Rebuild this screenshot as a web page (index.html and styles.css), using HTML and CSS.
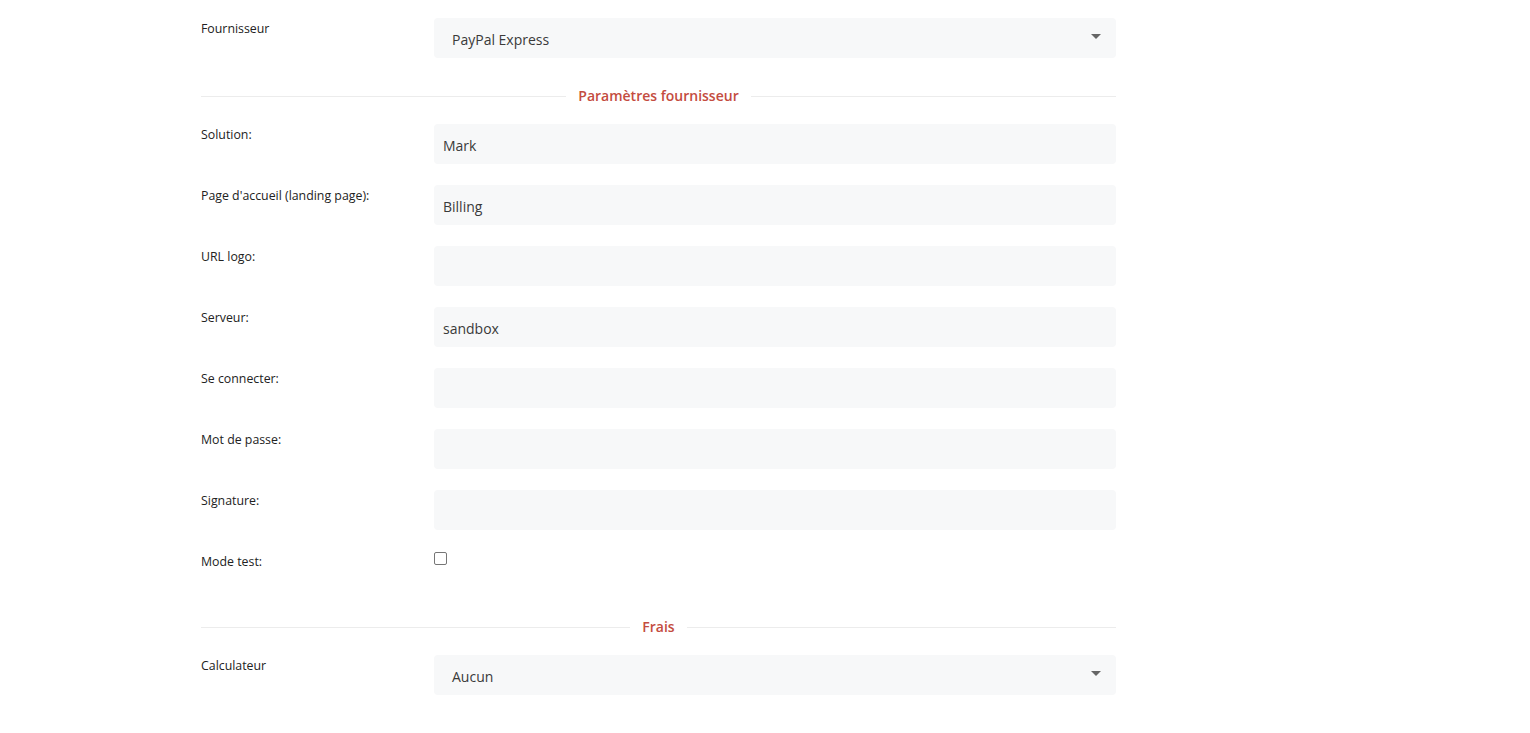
FILE: index.html
```html
<!DOCTYPE html>
<html lang="fr">
<head>
<meta charset="utf-8">
<link rel="stylesheet" href="styles.css">
</head>
<body>
<div class="form">
  <div class="row">
    <label class="label">Fournisseur</label>
    <div class="select"><span>PayPal Express</span><span class="caret"></span></div>
  </div>
  <div class="sep"><span>Paramètres fournisseur</span></div>
  <div class="row">
    <label class="label">Solution:</label>
    <div class="input">Mark</div>
  </div>
  <div class="row">
    <label class="label">Page d'accueil (landing page):</label>
    <div class="input">Billing</div>
  </div>
  <div class="row">
    <label class="label">URL logo:</label>
    <div class="input"></div>
  </div>
  <div class="row">
    <label class="label">Serveur:</label>
    <div class="input">sandbox</div>
  </div>
  <div class="row">
    <label class="label">Se connecter:</label>
    <div class="input"></div>
  </div>
  <div class="row">
    <label class="label">Mot de passe:</label>
    <div class="input"></div>
  </div>
  <div class="row">
    <label class="label">Signature:</label>
    <div class="input"></div>
  </div>
  <div class="row row-check">
    <label class="label">Mode test:</label>
    <div><span class="check"></span></div>
  </div>
  <div class="sep"><span>Frais</span></div>
  <div class="row">
    <label class="label">Calculateur</label>
    <div class="select"><span>Aucun</span><span class="caret"></span></div>
  </div>
</div>
</body>
</html>
```
FILE: styles.css
```css
html, body {
  margin: 0;
  padding: 0;
  background: #fff;
  font-family: "Open Sans", "Noto Sans", sans-serif;
}
.form {
  width: 915px;
  padding: 18px 0 0 201px;
}
.row {
  display: grid;
  grid-template-columns: 233px 682px;
  margin-bottom: 21px;
}
.label {
  font-size: 12.35px;
  line-height: 20px;
  color: #222;
  padding-top: 1px;
}
.input, .select {
  height: 40px;
  box-sizing: border-box;
  background: #f7f8f9;
  border-radius: 4px;
  font-size: 14px;
  color: #3a3a3a;
  display: flex;
  align-items: center;
  padding-top: 2px;
}
.input { padding-left: 9px; }
.select {
  padding: 2px 15px 0 18px;
  justify-content: space-between;
}
.caret {
  width: 0;
  height: 0;
  border-left: 5px solid transparent;
  border-right: 5px solid transparent;
  border-top: 5px solid #666;
  margin-top: -6px;
}
.row-check {
  height: 36px;
  margin-bottom: 0;
}
.check {
  display: block;
  width: 13px;
  height: 13px;
  box-sizing: border-box;
  border: 1px solid #767676;
  border-radius: 2px;
  margin-top: 1px;
  background: #fff;
}
.sep {
  display: flex;
  align-items: center;
  gap: 12px;
  margin: 28px 0 18px;
  font-size: 14px;
  font-weight: 600;
  line-height: 20px;
  color: #c44c40;
}
.sep::before, .sep::after {
  content: "";
  flex: 1;
  height: 1px;
  background: #ececec;
}
.row-check + .sep { margin-top: 30px; }
```
